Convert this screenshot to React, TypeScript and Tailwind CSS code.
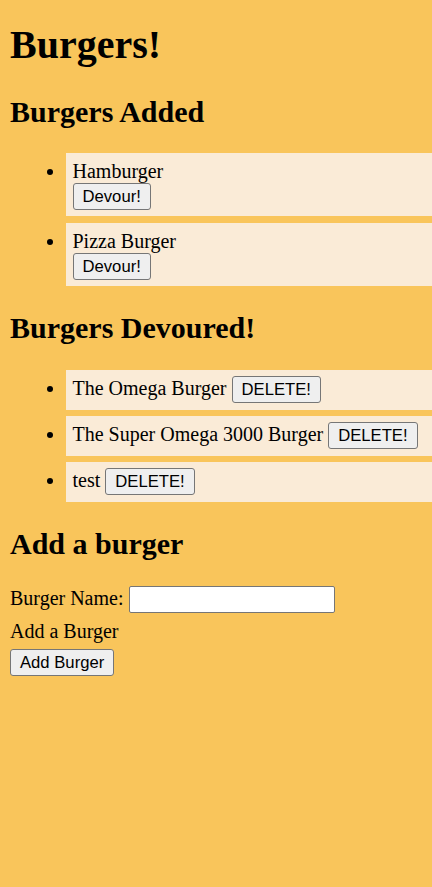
import React from "react";

const btn =
  "inline-block h-[27px] rounded-[3px] border border-[#767676] bg-[#efefef] px-[9px] font-['Liberation_Sans',Arial,sans-serif] text-[16.67px] leading-[25px] text-black align-baseline";

export default function App() {
  const added = ["Hamburger", "Pizza Burger"];
  const devoured = ["The Omega Burger", "The Super Omega 3000 Burger", "test"];
  return (
    <div className="min-h-[887px] w-full overflow-hidden bg-[#f9c55b] pl-[10px] font-['Liberation_Serif','Times_New_Roman',serif] text-[20px] leading-[23px] text-black">
      <div className="flex flex-col">
        <h1 className="mt-[21.5px] text-[40px] font-bold leading-[46px]">Burgers!</h1>
        <h2 className="mt-[27px] text-[30px] font-bold leading-[34.5px]">Burgers Added</h2>
        <ul className="mt-[24px] list-disc pl-[56px] marker:text-black">
          {added.map((b, i) => (
            <li
              key={b}
              className={`bg-[#faebd7] pb-[6px] pl-[6.5px] pt-[7px] ${i > 0 ? "mt-[7px]" : ""}`}
            >
              <div>{b}</div>
              <div>
                <button className={btn}>Devour!</button>
              </div>
            </li>
          ))}
        </ul>
        <h2 className="mt-[25px] text-[30px] font-bold leading-[34.5px]">Burgers Devoured!</h2>
        <ul className="mt-[24.5px] list-disc pl-[56px]">
          {devoured.map((b, i) => (
            <li
              key={b}
              className={`bg-[#faebd7] pb-[7px] pl-[6.5px] pt-[6px] ${i > 0 ? "mt-[6px]" : ""}`}
            >
              {b} <button className={btn}>DELETE!</button>
            </li>
          ))}
        </ul>
        <h2 className="mt-[25px] text-[30px] font-bold leading-[34.5px]">Add a burger</h2>
        <form className="mt-[24.5px] flex flex-col items-start" onSubmit={(e) => e.preventDefault()}>
          <div className="flex items-start">
            <label className="mt-[1px]">Burger Name:</label>
            <input
              type="text"
              className="ml-[5px] h-[27px] w-[206px] rounded-[2px] border border-[#767676] bg-white px-[2px] font-['Liberation_Sans',Arial,sans-serif] text-[16.67px] outline-none"
            />
          </div>
          <div className="mt-[7px]">Add a Burger</div>
          <button type="submit" className={`${btn} mt-[6px]`}>
            Add Burger
          </button>
        </form>
      </div>
    </div>
  );
}
